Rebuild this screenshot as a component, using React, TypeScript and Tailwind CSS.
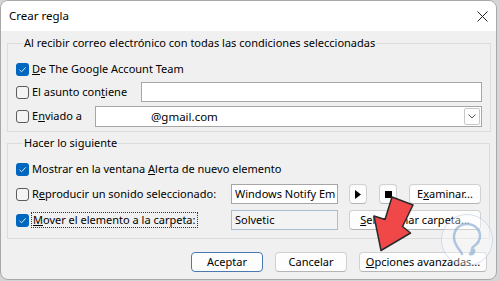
import React from 'react';

const font = { fontFamily: '"Noto Sans", "Liberation Sans", sans-serif' };

const Check: React.FC<{ checked?: boolean }> = ({ checked }) =>
  checked ? (
    <div className="w-[13px] h-[13px] rounded-[3px] bg-[#0067c0] flex items-center justify-center shrink-0">
      <svg width="9" height="9" viewBox="0 0 9 9">
        <path d="M1.5 4.8 L3.6 6.8 L7.6 2.4" fill="none" stroke="#dfe9f5" strokeWidth="1" />
      </svg>
    </div>
  ) : (
    <div className="w-[13px] h-[13px] rounded-[3px] border border-[#5c5c5c] bg-[#f4f4f4] shrink-0" />
  );

const Btn: React.FC<{ w: string; children: React.ReactNode; def?: boolean }> = ({ w, children, def }) => (
  <div
    className={`${w} h-[20px] rounded-[4px] bg-[#fdfdfd] border ${
      def ? 'border-[#4a78b0]' : 'border-[#d0d0d0] border-b-[#b5b5b5]'
    } flex items-center justify-center shrink-0 whitespace-nowrap`}
  >
    {children}
  </div>
);

const App: React.FC = () => {
  return (
    <div className="w-[499px] h-[281px] bg-[#d6d6d6] overflow-hidden relative text-[11px] text-black" style={font}>
      <div className="w-[497px] h-[280px] bg-[#f0f0f0] border border-[#a8a8a8] rounded-[8px] overflow-hidden flex flex-col">
        {/* title bar */}
        <div className="h-[30px] bg-white flex items-center justify-between pl-[8px] pr-[7px] shrink-0">
          <span className="text-[11.5px]">Crear regla</span>
          <svg width="11" height="11" viewBox="0 0 11 11" className="mr-[1px]">
            <path d="M0.5 0.5 L10.5 10.5 M10.5 0.5 L0.5 10.5" stroke="#222" strokeWidth="1" />
          </svg>
        </div>

        <div className="px-[6px]">
          {/* group 1 */}
          <fieldset className="mt-[4px] border border-[#dcdcdc] h-[97px] pl-[8px] pr-[8px]">
            <legend className="ml-[7px] px-[1px] leading-[16px]">
              Al recibir correo electrónico con todas las condiciones seleccionadas
            </legend>
            <div className="flex items-center h-[20px] mt-[8px]">
              <Check checked />
              <span className="ml-[3px]">
                <u>D</u>e The Google Account Team
              </span>
            </div>
            <div className="flex items-center h-[20px] mt-[3px]">
              <div className="w-[125px] flex items-center whitespace-nowrap">
                <Check />
                <span className="ml-[3px]">
                  El asunto con<u>t</u>iene
                </span>
              </div>
              <div className="w-[341px] h-[20px] bg-white border border-[#a6a6a6]" />
            </div>
            <div className="flex items-center h-[21px] mt-[4px]">
              <div className="w-[79px] flex items-center whitespace-nowrap">
                <Check />
                <span className="ml-[3px]">
                  E<u>n</u>viado a
                </span>
              </div>
              <div className="w-[387px] h-[21px] bg-white border border-[#a6a6a6] flex items-center justify-between pr-[1px]">
                <span className="ml-[55px] text-[11.5px]">@gmail.com</span>
                <div className="w-[16px] h-[17px] border border-[#c8c8c8] rounded-[2px] bg-white flex items-center justify-center">
                  <svg width="8" height="5" viewBox="0 0 8 5">
                    <path d="M0.5 0.5 L4 4 L7.5 0.5" fill="none" stroke="#555" strokeWidth="1" />
                  </svg>
                </div>
              </div>
            </div>
          </fieldset>

          {/* group 2 */}
          <fieldset className="mt-[3px] border border-[#dcdcdc] h-[104px] pl-[8px] pr-[8px]">
            <legend className="ml-[7px] px-[1px] leading-[16px]">Hacer lo siguiente</legend>
            <div className="flex items-center h-[20px] mt-[8px]">
              <Check checked />
              <span className="ml-[3px]">
                Mostrar en la ventana <u>A</u>lerta de nuevo elemento
              </span>
            </div>
            <div className="flex items-center h-[20px] mt-[5px]">
              <div className="w-[215px] flex items-center whitespace-nowrap">
                <Check />
                <span className="ml-[3px]">
                  R<u>e</u>producir un sonido seleccionado:
                </span>
              </div>
              <div className="w-[107px] h-[20px] bg-white border border-[#a6a6a6] flex items-center pl-[3px] overflow-hidden whitespace-nowrap">
                Windows Notify Em
              </div>
              <div className="ml-[11px]">
                <Btn w="w-[18px]">
                  <svg width="6" height="9" viewBox="0 0 6 9">
                    <path d="M0 0 L6 4.5 L0 9 Z" fill="#000" />
                  </svg>
                </Btn>
              </div>
              <div className="ml-[12px]">
                <Btn w="w-[18px]">
                  <div className="w-[7px] h-[7px] bg-black" />
                </Btn>
              </div>
              <div className="ml-[12px]">
                <Btn w="w-[72px]">
                  <span>
                    E<u>x</u>aminar...
                  </span>
                </Btn>
              </div>
            </div>
            <div className="flex items-center h-[20px] mt-[6px]">
              <div className="w-[215px] flex items-center whitespace-nowrap">
                <Check checked />
                <span className="ml-[2px] px-[1px] border border-dotted border-[#333] leading-[14px]">
                  <u>M</u>over el elemento a la carpeta:
                </span>
              </div>
              <div className="w-[107px] h-[20px] bg-[#f3f3f3] border border-[#a9bdd3] flex items-center pl-[3px]">
                Solvetic
              </div>
              <div className="ml-[11px]">
                <Btn w="w-[132px]">
                  <span>
                    <u>S</u>eleccionar carpeta...
                  </span>
                </Btn>
              </div>
            </div>
          </fieldset>

          {/* bottom buttons */}
          <div className="flex justify-end gap-[12px] mt-[13px] pr-[3px]">
            <Btn w="w-[72px]" def>
              Aceptar
            </Btn>
            <Btn w="w-[72px]">Cancelar</Btn>
            <Btn w="w-[128px]">
              <span>
                <u>O</u>pciones avanzadas...
              </span>
            </Btn>
          </div>
        </div>
      </div>

      {/* watermark logo */}
      <svg className="absolute left-[440px] top-[213px]" width="54" height="54" viewBox="0 0 54 54">
        <circle cx="27" cy="27" r="25.5" fill="rgba(255,255,255,0.35)" stroke="rgba(170,195,225,0.5)" strokeWidth="1" />
        <path
          d="M22 41 C20 36 14 33 14 24 C14 16 20 11 27 11 C34 11 40 16 40 23 C40 29 36 32 33 34 C31 36 33 39 30 41 M30 41 C32 42 35 40 34 37"
          fill="none"
          stroke="rgba(150,180,215,0.75)"
          strokeWidth="2.5"
          strokeLinecap="round"
        />
      </svg>

      {/* red arrow */}
      <svg className="absolute left-0 top-0 pointer-events-none" width="499" height="281" viewBox="0 0 499 281">
        <polygon
          points="392,197 413,205 402.5,226.5 410.5,233 381,250.5 374,216 385,219.5"
          fill="#f04848"
          stroke="#2a2a2a"
          strokeWidth="1.5"
          strokeLinejoin="round"
        />
      </svg>
    </div>
  );
};

export default App;
